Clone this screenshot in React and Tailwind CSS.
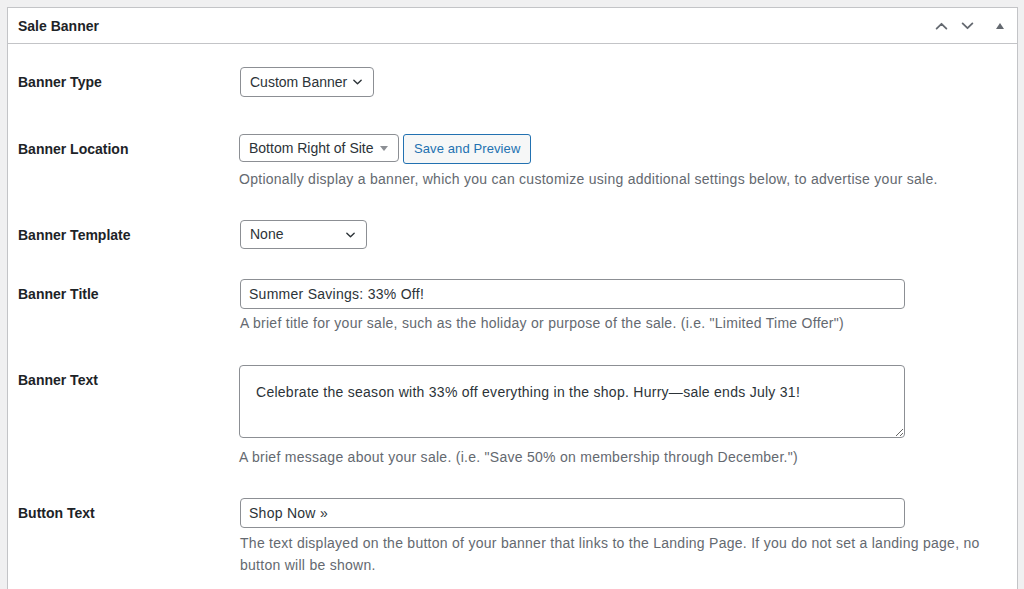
import React from "react";

const font = { fontFamily: '"Liberation Sans", Arial, sans-serif' };

const Chevron = ({ className = "" }) => (
  <svg viewBox="0 0 12 8" className={className} fill="none" stroke="currentColor" strokeWidth="1.5" strokeLinecap="round" strokeLinejoin="round">
    <path d="M2 2l4 4 4-4" />
  </svg>
);

const Label = ({ children }) => (
  <div className="w-[222px] shrink-0 h-[30px] flex items-center text-[14px] font-bold text-[#1d2327]">{children}</div>
);

const Desc = ({ children, className = "" }) => (
  <p className={`text-[14px] leading-[22px] tracking-[0.27px] text-[#646970] ${className}`}>{children}</p>
);

const Select = ({ value, width, arrow = "chevron", className = "" }) => (
  <div className={`${width} ${className} flex items-center justify-between border border-[#8c8f94] rounded-[4px] bg-white pl-[9px] pr-[10px] text-[14px] text-[#2c3338]`}>
    <span>{value}</span>
    {arrow === "chevron" ? (
      <Chevron className="w-[11px] h-[8px] text-[#2c3338]" />
    ) : (
      <svg viewBox="0 0 8 5" className="w-[8px] h-[5px]"><path d="M0 0h8L4 5z" fill="#8c8f94" /></svg>
    )}
  </div>
);

const TextInput = ({ value }) => (
  <div className="w-[665px] h-[30px] flex items-center border border-[#8c8f94] rounded-[4px] bg-white px-[8px] text-[14px] tracking-[0.27px] text-[#2c3338]">
    {value}
  </div>
);

export default function App() {
  return (
    <div style={font} className="h-[589px] overflow-hidden bg-[#f0f0f1] pl-[7px] pt-[7px]">
      <div className="w-[1011px] h-[600px] border border-[#c3c4c7] bg-white">
        {/* header */}
        <div className="h-[36px] border-b border-[#c3c4c7] flex items-center justify-between pl-[10px] pr-[13px]">
          <h2 className="pt-[2px] text-[14px] font-bold text-[#1d2327]">Sale Banner</h2>
          <div className="flex items-center text-[#646970]">
            <svg viewBox="0 0 14 9" className="w-[13px] h-[8px]" fill="none" stroke="currentColor" strokeWidth="2" strokeLinecap="round" strokeLinejoin="round"><path d="M1.5 7.5l5.5-5.5 5.5 5.5" /></svg>
            <svg viewBox="0 0 14 9" className="w-[13px] h-[8px] ml-[13px]" fill="none" stroke="currentColor" strokeWidth="2" strokeLinecap="round" strokeLinejoin="round"><path d="M1.5 1.5l5.5 5.5 5.5-5.5" /></svg>
            <svg viewBox="0 0 8 6" className="w-[8px] h-[6px] ml-[22px]"><path d="M4 0l4 6H0z" fill="currentColor" /></svg>
          </div>
        </div>

        {/* body */}
        <div className="pl-[10px] pt-[23px]">
          {/* Banner Type */}
          <div className="flex">
            <Label>Banner Type</Label>
            <Select value="Custom Banner" width="w-[134px]" className="h-[30px]" />
          </div>

          {/* Banner Location */}
          <div className="flex mt-[37px]">
            <Label>Banner Location</Label>
            <div className="flex flex-col -ml-[1px]">
              <div className="flex items-start gap-[4px]">
                <Select value="Bottom Right of Site" width="w-[160px]" arrow="triangle" className="h-[28px] pr-[8px]" />
                <button className="h-[30px] px-[10px] border border-[#2271b1] rounded-[3px] bg-[#f6f7f7] text-[13px] tracking-[0.1px] text-[#2271b1]">Save and Preview</button>
              </div>
              <Desc className="mt-[4px]">Optionally display a banner, which you can customize using additional settings below, to advertise your sale.</Desc>
            </div>
          </div>

          {/* Banner Template */}
          <div className="flex mt-[30px]">
            <Label>Banner Template</Label>
            <Select value="None" width="w-[127px]" className="h-[29px]" />
          </div>

          {/* Banner Title */}
          <div className="flex mt-[29px]">
            <Label>Banner Title</Label>
            <div className="flex flex-col">
              <TextInput value="Summer Savings: 33% Off!" />
              <Desc className="mt-[3px]">A brief title for your sale, such as the holiday or purpose of the sale. (i.e. "Limited Time Offer")</Desc>
            </div>
          </div>

          {/* Banner Text */}
          <div className="flex mt-[31px]">
            <Label>Banner Text</Label>
            <div className="flex flex-col -ml-[1px]">
              <textarea
                readOnly
                defaultValue="Celebrate the season with 33% off everything in the shop. Hurry—sale ends July 31!"
                className="block w-[666px] h-[73px] border border-[#8c8f94] rounded-[4px] bg-white pl-[16px] pt-[16px] text-[14px] leading-[20px] tracking-[0.27px] text-[#2c3338] outline-none"
              />
              <Desc className="mt-[8px]">A brief message about your sale. (i.e. "Save 50% on membership through December.")</Desc>
            </div>
          </div>

          {/* Button Text */}
          <div className="flex mt-[30px]">
            <Label>Button Text</Label>
            <div className="flex flex-col">
              <TextInput value="Shop Now »" />
              <Desc className="mt-[4px] w-[745px]">The text displayed on the button of your banner that links to the Landing Page. If you do not set a landing page, no button will be shown.</Desc>
            </div>
          </div>
        </div>
      </div>
    </div>
  );
}
